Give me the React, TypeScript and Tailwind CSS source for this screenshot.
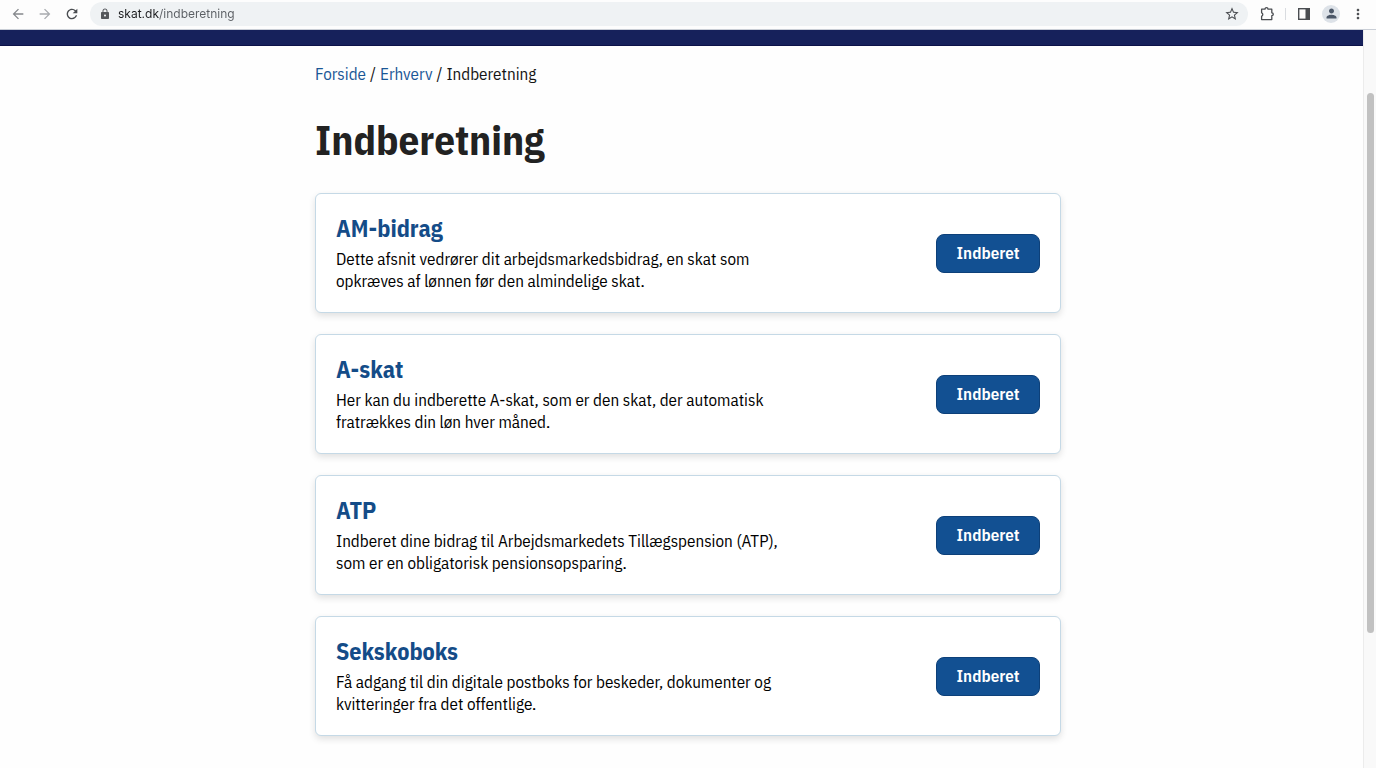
import React from "react";
import { MdLock, MdStarBorder, MdPerson, MdMoreVert, MdRefresh, MdArrowBack, MdArrowForward } from "react-icons/md";

type Entry = { id: string; title: string; text: string };

const entries: Entry[] = [
  {
    id: "am-bidrag",
    title: "AM-bidrag",
    text: "Dette afsnit vedrører dit arbejdsmarkedsbidrag, en skat som opkræves af lønnen før den almindelige skat.",
  },
  {
    id: "a-skat",
    title: "A-skat",
    text: "Her kan du indberette A-skat, som er den skat, der automatisk fratrækkes din løn hver måned.",
  },
  {
    id: "atp",
    title: "ATP",
    text: "Indberet dine bidrag til Arbejdsmarkedets Tillægspension (ATP), som er en obligatorisk pensionsopsparing.",
  },
  {
    id: "sekskoboks",
    title: "Sekskoboks",
    text: "Få adgang til din digitale postboks for beskeder, dokumenter og kvitteringer fra det offentlige.",
  },
];

function IconButton({ label, children }: { label: string; children: React.ReactNode }) {
  return (
    <button type="button" aria-label={label} className="flex size-5 shrink-0 items-center justify-center">
      {children}
    </button>
  );
}

function PuzzleIcon() {
  return (
    <svg viewBox="0 0 16 16" className="size-4" fill="none" stroke="#4a4d51" strokeWidth="1.3" strokeLinejoin="round">
      <path d="M2.6 3.2H6C6 1 9 1 9 3.2H12.8V6.8C14.8 6.8 14.8 9.6 12.8 9.6V13.6H2.6V10.2C4.2 9.8 4.2 7.2 2.6 6.8Z" />
    </svg>
  );
}

function SidePanelIcon() {
  return (
    <svg viewBox="0 0 14 14" className="size-3.5">
      <rect x="1.7" y="1.7" width="10.6" height="10.6" fill="none" stroke="#4a4d51" strokeWidth="1.4" />
      <rect x="8.5" y="1.5" width="4" height="11" fill="#4a4d51" />
    </svg>
  );
}

function BrowserBar() {
  return (
    <div className="flex h-[30px] shrink-0 items-center border-b border-[#c9ced6] bg-[#fdfdfd] pr-2 pb-[2px] pl-2 font-['Inter',sans-serif]">
      <div className="flex items-center gap-[7px]">
        <IconButton label="Tilbage">
          <MdArrowBack className="size-4 text-[#85888c]" />
        </IconButton>
        <IconButton label="Frem">
          <MdArrowForward className="size-4 text-[#a8abaf]" />
        </IconButton>
        <IconButton label="Genindlæs">
          <MdRefresh className="size-4 text-[#4a4d51]" />
        </IconButton>
      </div>
      <div className="ml-2 flex h-6 min-w-0 grow items-center rounded-full bg-[#eff2f4] pr-[6px] pl-[9px]">
        <MdLock className="size-3 shrink-0 text-[#54575b]" />
        <input
          type="text"
          aria-label="Adresse"
          defaultValue="skat.dk/indberetning"
          className="ml-[7px] min-w-0 grow bg-[linear-gradient(to_right,#1c1d1f_41px,#5b5f64_41px)] bg-clip-text text-[12px] leading-5 text-transparent outline-none"
        />
        <IconButton label="Bogmærk">
          <MdStarBorder className="size-4 text-[#4a4d51]" />
        </IconButton>
      </div>
      <div className="ml-[9px] flex items-center gap-2">
        <IconButton label="Udvidelser">
          <PuzzleIcon />
        </IconButton>
        <span className="h-3 w-px bg-[#d9dce0]" />
        <IconButton label="Sidepanel">
          <SidePanelIcon />
        </IconButton>
        <button
          type="button"
          aria-label="Profil"
          className="flex size-[18px] items-center justify-center rounded-full bg-[#dde2e8]"
        >
          <MdPerson className="size-[15px] text-[#4b5768]" />
        </button>
        <IconButton label="Menu">
          <MdMoreVert className="size-4 text-[#4a4d51]" />
        </IconButton>
      </div>
    </div>
  );
}

function Card({ entry }: { entry: Entry }) {
  return (
    <section
      aria-labelledby={entry.id}
      className="flex items-center justify-between rounded-md border border-[#c5d9e6] bg-white p-5 shadow-[0_3px_7px_rgba(0,0,0,0.12)]"
    >
      <div className="max-w-[448px]">
        <h2 id={entry.id} className="text-[24px] leading-7 font-bold text-[#144c88]">
          {entry.title}
        </h2>
        <p className="mt-1.5 text-[17px] leading-[22px] text-black">{entry.text}</p>
      </div>
      <button
        type="button"
        aria-describedby={entry.id}
        className="h-[39px] w-[104px] shrink-0 rounded-lg border border-[#0d4079] bg-[#125092] text-[17px] leading-5 font-semibold text-white"
      >
        Indberet
      </button>
    </section>
  );
}

export default function App() {
  return (
    <div className="flex min-h-screen flex-col bg-[#fefefe] font-['IBM_Plex_Sans_Condensed','Roboto_Condensed',sans-serif]">
      <BrowserBar />
      <div className="flex grow">
        <div className="min-w-0 grow">
          <div className="h-4 border-b border-[#0c1248] bg-[#16215b]" />
          <main className="pt-4 pb-[30px] pl-[13px]">
            <div className="mx-auto max-w-[746px]">
              <nav aria-label="Brødkrumme" className="flex gap-1 text-[17px] leading-6 text-[#151515]">
                <a href="#forside" className="text-[#1a5796]">Forside</a>
                <span>/</span>
                <a href="#erhverv" className="text-[#1a5796]">Erhverv</a>
                <span>/</span>
                <span aria-current="page">Indberetning</span>
              </nav>
              <h1 className="mt-[30px] text-[41px] leading-[48px] font-bold text-[#222]">Indberetning</h1>
              <div className="mt-[29px] flex flex-col gap-[21px]">
                {entries.map((entry) => (
                  <Card key={entry.id} entry={entry} />
                ))}
              </div>
            </div>
          </main>
        </div>
        <div className="flex w-[13px] shrink-0 flex-col items-center border-l border-[#ececec] bg-[#f9f9f9] pt-[63px]">
          <div className="h-[540px] w-[7px] rounded-full bg-[#c1c1c1]" />
        </div>
      </div>
    </div>
  );
}
